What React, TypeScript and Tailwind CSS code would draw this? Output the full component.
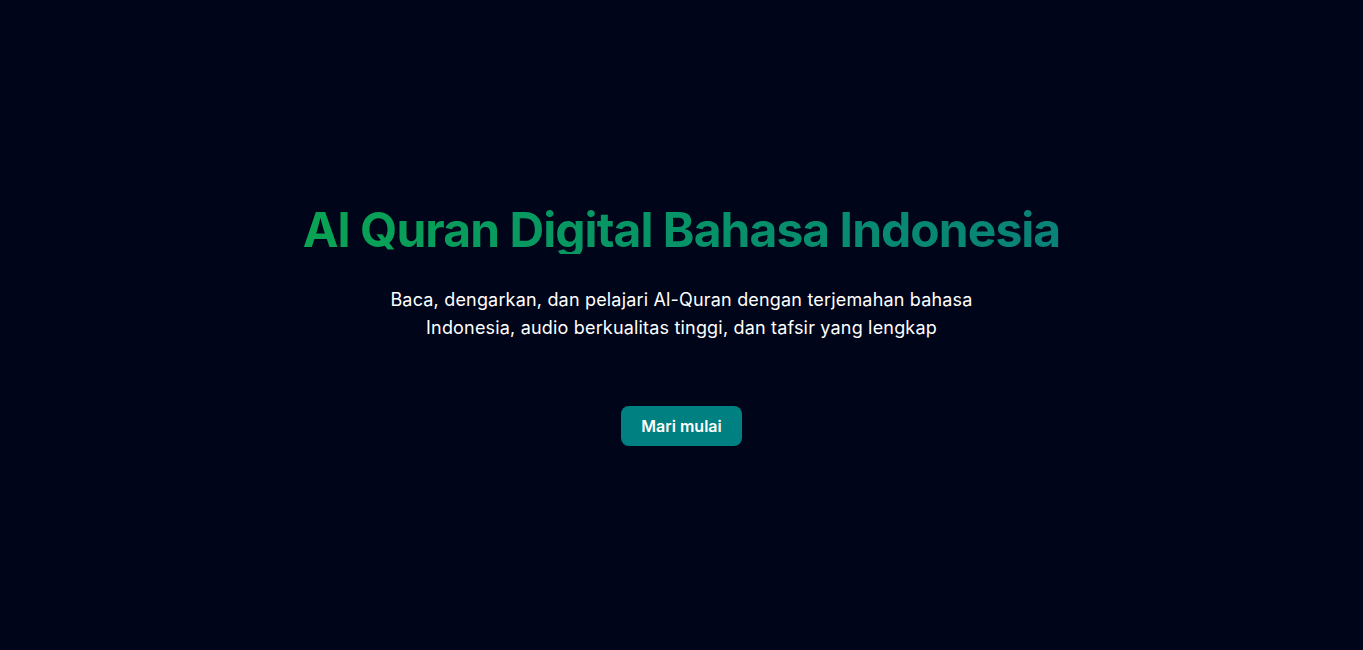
export default function App() {
  return (
    <div
      className="flex h-screen w-full flex-col items-center justify-center bg-[#00051a] pt-[2px] text-center"
      style={{ fontFamily: "Inter, 'Noto Sans', sans-serif" }}
    >
      <h1 className="bg-gradient-to-r from-[#0aa352] to-[#0a8278] bg-clip-text text-5xl leading-none font-bold tracking-[-0.02em] text-transparent">
        Al Quran Digital Bahasa Indonesia
      </h1>
      <p className="mt-8 max-w-[600px] text-lg leading-7 tracking-[0.01em] text-white">
        Baca, dengarkan, dan pelajari Al-Quran dengan terjemahan bahasa Indonesia, audio berkualitas tinggi, dan tafsir yang lengkap
      </p>
      <button className="mt-16 h-10 rounded-lg bg-[#008080] px-5 text-base font-semibold text-white">
        Mari mulai
      </button>
    </div>
  );
}
